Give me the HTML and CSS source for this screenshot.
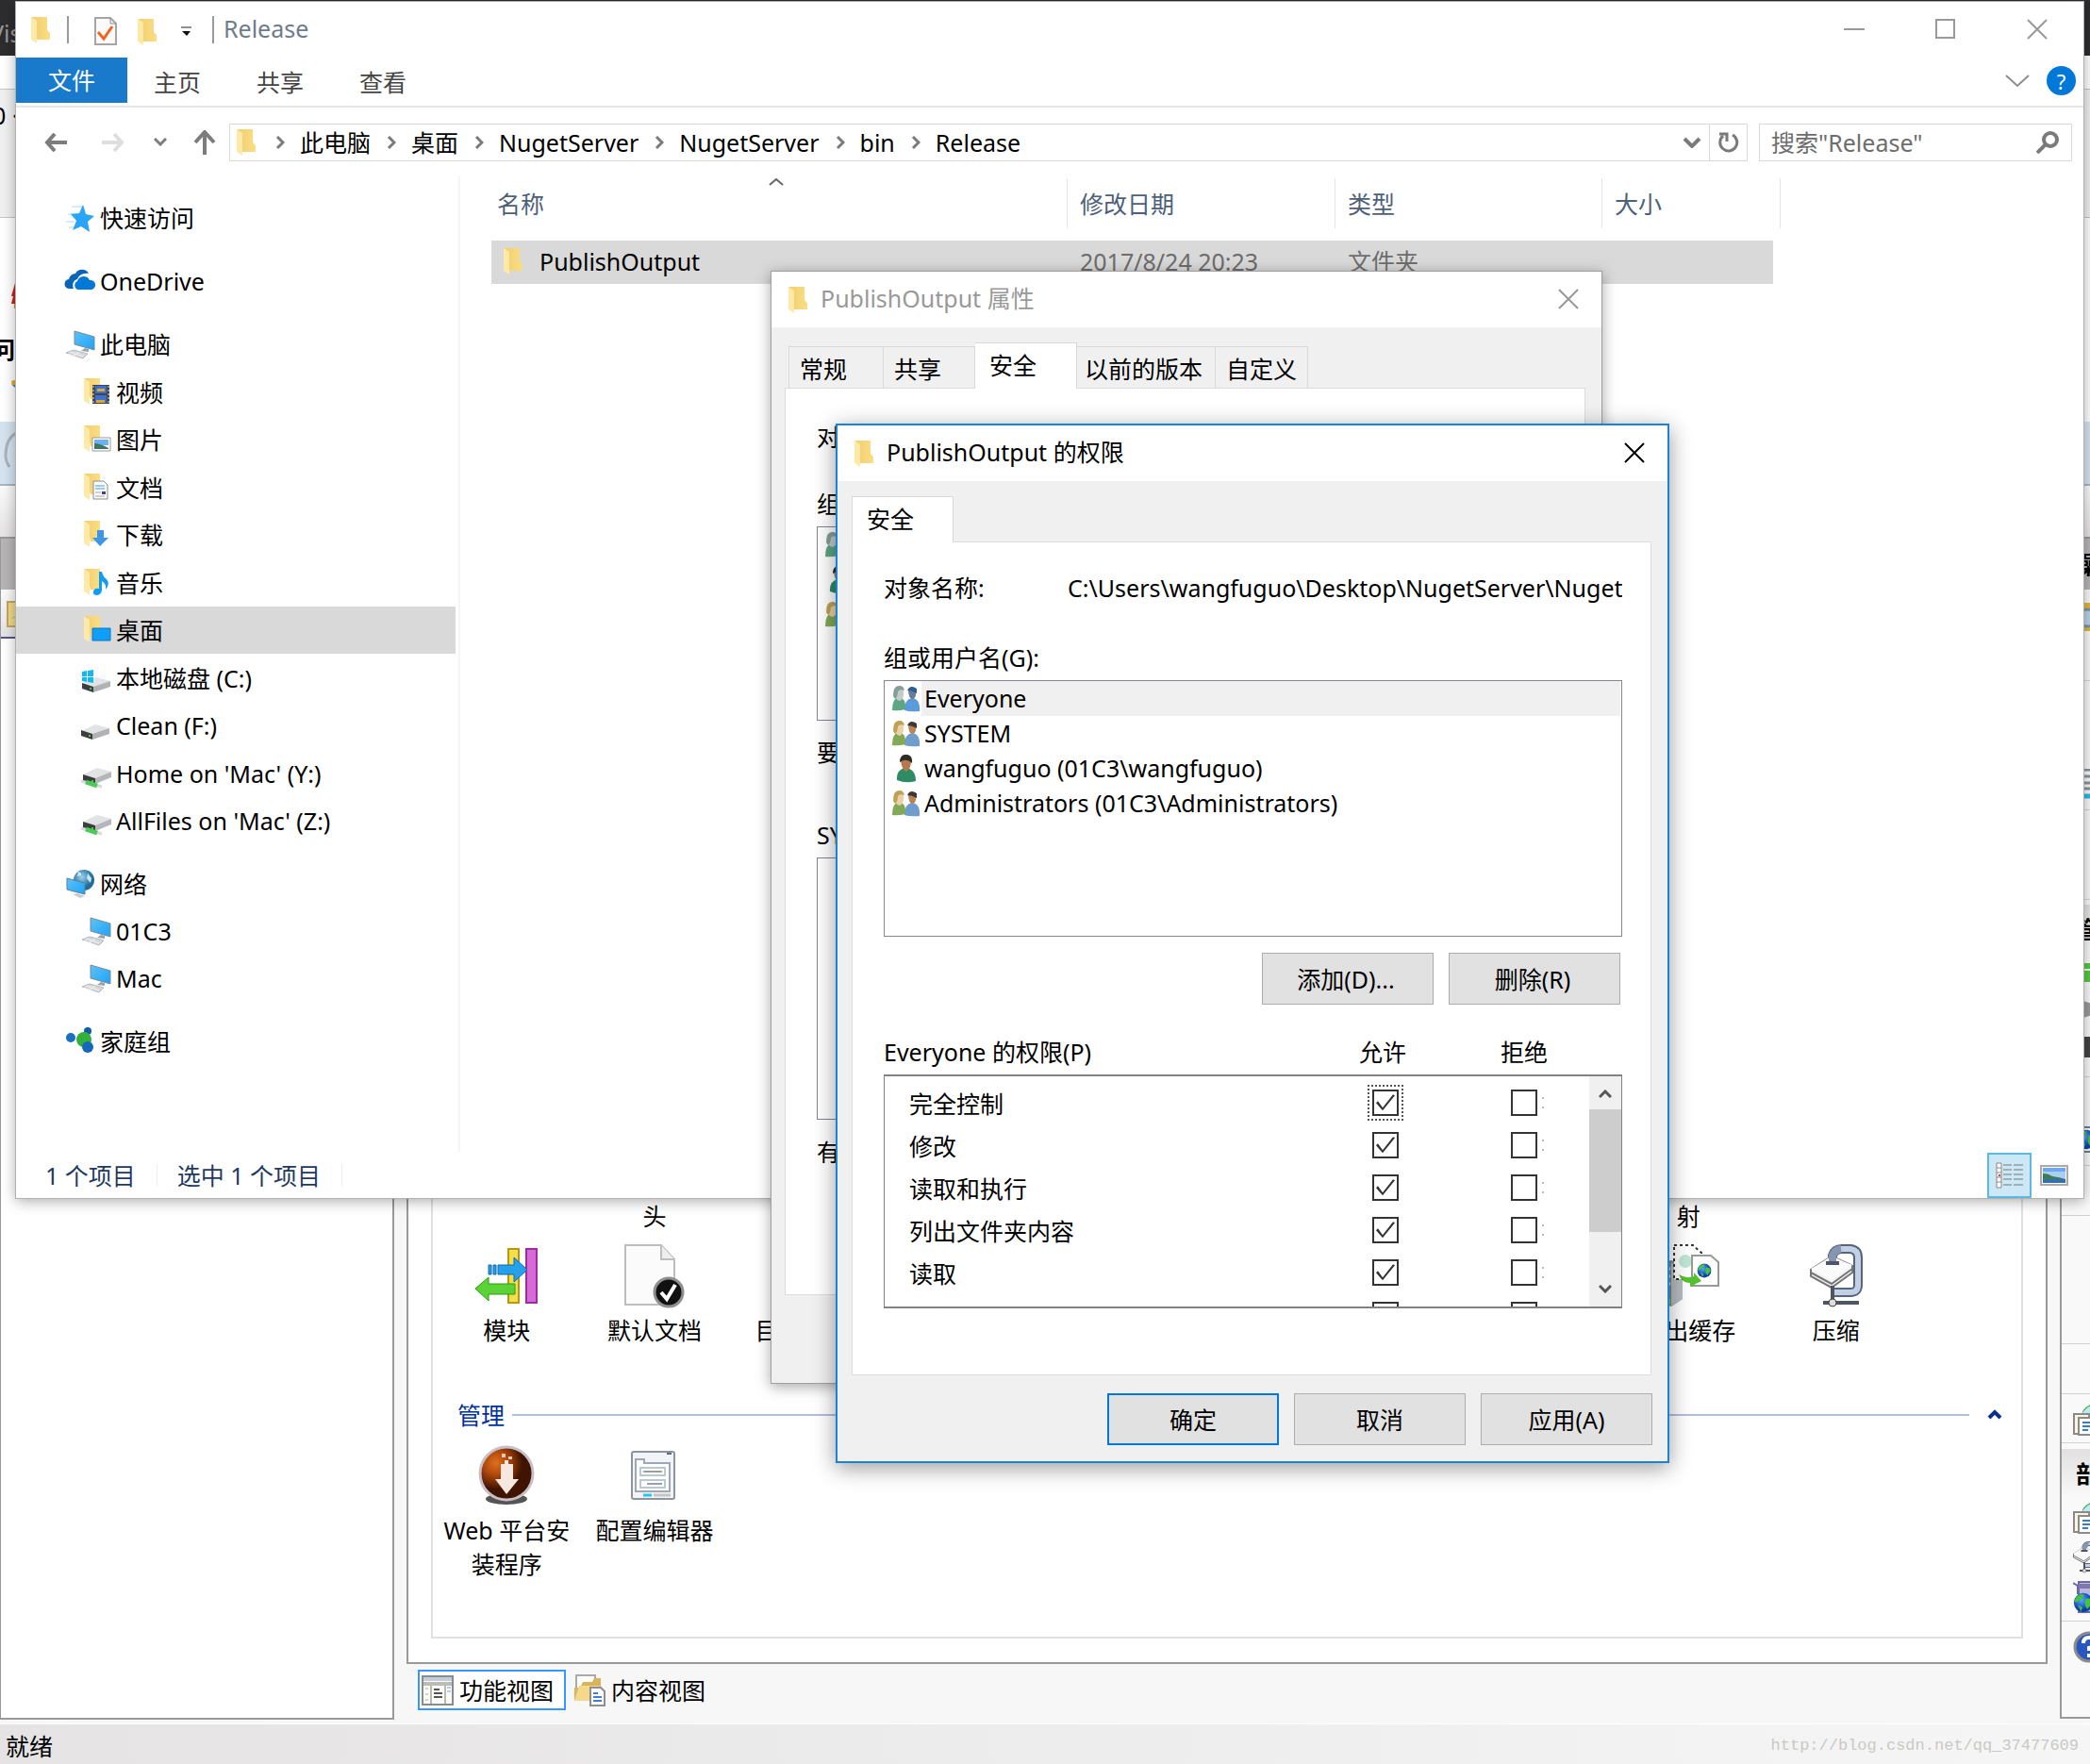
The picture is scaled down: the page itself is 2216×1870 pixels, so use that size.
FILE: index.html
```html
<!DOCTYPE html>
<html lang="zh-CN">
<head>
<meta charset="utf-8">
<title>PublishOutput 的权限</title>
<link rel="stylesheet" href="styles.css">
</head>
<body>
<svg class="defs" aria-hidden="true">
  <defs>
    <linearGradient id="gold" x1="0" x2="1"><stop offset="0" stop-color="#f2cf70"/><stop offset="1" stop-color="#fbdd84"/></linearGradient>
    <linearGradient id="screen" x1="0" y1="0" x2="1" y2="1"><stop offset="0" stop-color="#5cc3f9"/><stop offset="1" stop-color="#1fa2f5"/></linearGradient>
    <radialGradient id="globe" cx=".4" cy=".35"><stop offset="0" stop-color="#9fd0ee"/><stop offset="1" stop-color="#1f6d9c"/></radialGradient>
    <radialGradient id="earth" cx=".4" cy=".35"><stop offset="0" stop-color="#5aa8ff"/><stop offset="1" stop-color="#0b3fb0"/></radialGradient>
    <radialGradient id="rust" cx=".3" cy=".3"><stop offset="0" stop-color="#e0701c"/><stop offset=".5" stop-color="#a9440b"/><stop offset="1" stop-color="#3f1402"/></radialGradient>
    <symbol id="folder" viewBox="0 0 20 28"><path d="M1 0h16v14l3 3v7H6z" fill="url(#gold)"/><path d="M0 0l6 4v24l-6-4z" fill="#ffe9a6"/></symbol>
    <symbol id="folderwide" viewBox="0 0 28 30"><path d="M1 1h16v22H7z" fill="url(#gold)"/><path d="M0 1l6 4v24l-6-4z" fill="#ffe9a6"/></symbol>
    <symbol id="star" viewBox="0 0 32 32"><path d="M7 4h11M3 12h9M1 20h9M4 26h6" stroke="#a5daf9" stroke-width="1"/><path d="M19 2l3 10 9 2-7 6 2 11-9-6-9 4 4-10-6-7 9-1z" fill="#2aa5f5"/></symbol>
    <symbol id="cloud" viewBox="0 0 32 32"><path d="M9 24H5a5 5 0 0 1-1-10 7 7 0 0 1 7-6 8 8 0 0 1 14 0c-7-1-11 3-12 6-4 1-6 5-4 10z" fill="#0a64b8"/><path d="M13 25a5 5 0 0 1 0-9 7 7 0 0 1 13-1 5 5 0 0 1 2 10z" fill="#0078d7"/></symbol>
    <symbol id="pc" viewBox="0 0 32 32"><path d="M10 2l21 6v14l-21-6z" fill="url(#screen)" stroke="#7c8a95"/><path d="M21 20l4 1v3l-8-1z" fill="#9aa3aa"/><path d="M1 25l8-3 15 4-5 5z" fill="#d7dadd" stroke="#b4b8bc"/><path d="M5 24l14 5M3 26l13 5M9 28l6-4" stroke="#f2f2f2"/></symbol>
    <symbol id="drive" viewBox="0 0 32 32"><path d="M1 19l15-7 15 4-18 7z" fill="#e2e3e5"/><path d="M13 22l18-6v6l-18 6z" fill="#b1b2b5"/><path d="M1 18l12 4v6L1 24z" fill="#3b3d40"/><path d="M9 23h2v2H9z" fill="#36d13b"/></symbol>
    <symbol id="windrive" viewBox="0 0 32 32"><use href="#drive" y="3" width="32" height="32"/><path d="M1 9l5-1v6H1zM7 8l6-1v7H7zM1 15h5v5l-5-1zM7 15h6v6l-6-1z" fill="#12b8f4"/></symbol>
    <symbol id="netdrive" viewBox="0 0 34 32"><path d="M3 12l15-7 15 4-17 7z" fill="#e2e3e5"/><path d="M16 16l17-7v6l-17 7z" fill="#b5b6b9"/><path d="M3 12l13 4v7L3 19z" fill="#3b3d40"/><path d="M12 18h2v2h-2z" fill="#36d13b"/><path d="M1 19l22 6" stroke="#d9d9d9" stroke-width="3"/><path d="M6 20l12 4" stroke="#4ccb56" stroke-width="5"/></symbol>
    <symbol id="network" viewBox="0 0 32 32"><circle cx="20" cy="12" r="11" fill="url(#globe)"/><path d="M14 3q4 1 3 4l-4 1zM24 5l4 5-1 5-4-5z" fill="#cfe7f5"/><path d="M2 10l19 5v12L2 22z" fill="url(#screen)" stroke="#5e7f96"/><path d="M8 27l8 4 5-2-8-3z" fill="#c7cbd0"/></symbol>
    <symbol id="home" viewBox="0 0 32 32"><circle cx="24" cy="5" r="4" fill="#0d5ca8"/><circle cx="6" cy="12" r="5" fill="#1b6fc0"/><circle cx="20" cy="14" r="8" fill="#33b03b"/><circle cx="24" cy="22" r="6" fill="#1468bb"/></symbol>
    <symbol id="users" viewBox="0 0 30 30"><path d="M13 27q0-12 8-13 9 1 8 14-10 1-16-1z" fill="#6f9dce"/><path d="M17 5q4-5 8 0 1 9-3 10-5 0-5-10z" fill="#b98456"/><path d="M16 6q3-7 10-2v5q-5-3-10-3z" fill="#3e3733"/><path d="M0 27Q0 14 7 13q8 1 7 13-8 2-14 1z" fill="#82a957"/><path d="M2 6q5-7 10 0 1 9-4 11Q2 16 2 6z" fill="#ead2a8"/><path d="M1 12Q1 0 8 1q4 0 5 5-5-2-7 1 0 5-3 8z" fill="#c0a158"/></symbol>
    <symbol id="userscool" viewBox="0 0 30 30"><path d="M13 27q0-12 8-13 9 1 8 14-10 1-16-1z" fill="#5b9adb"/><path d="M17 5q4-5 8 0 1 9-3 10-5 0-5-10z" fill="#687c98"/><path d="M16 6q3-7 10-2v5q-5-3-10-3z" fill="#2f5e93"/><path d="M0 27Q0 14 7 13q8 1 7 13-8 2-14 1z" fill="#5da684"/><path d="M2 6q5-7 10 0 1 9-4 11Q2 16 2 6z" fill="#c3cbcb"/><path d="M1 12Q1 0 8 1q4 0 5 5-5-2-7 1 0 5-3 8z" fill="#869f96"/></symbol>
    <symbol id="user" viewBox="0 0 30 30"><path d="M5 27q-1-11 9-13 11 1 11 14-10 3-20-1z" fill="#2f8a66"/><path d="M9 6q6-6 11 0 0 9-5 12-5-2-6-12z" fill="#b5794c"/><path d="M8 8q0-9 8-8 6 1 5 9-4-4-9-3z" fill="#2f2b28"/></symbol>
    <symbol id="crumb" viewBox="0 0 10 16"><path d="M2 2l6 6-6 6" fill="none" stroke="#7a7a7a" stroke-width="3"/></symbol>
    <symbol id="down" viewBox="0 0 20 12"><path d="M2 2l8 8 8-8" fill="none" stroke="#7a7a7a" stroke-width="4"/></symbol>
    <symbol id="cross" viewBox="0 0 22 22"><path d="M1 1l20 20M21 1L1 21" fill="none" stroke="currentColor" stroke-width="2"/></symbol>
    <symbol id="clamp" viewBox="0 0 56 68"><path d="M24 18V12q2-7 10-7h9q8 1 8 9v29q0 8-8 8H22" fill="none" stroke="#56657c" stroke-width="10"/><path d="M24 18V12q2-7 10-7h9q8 1 8 9v29q0 8-8 8H22" fill="none" stroke="#c2d0e6" stroke-width="6"/><path d="M1 26l22-14 22 10-22 16z" fill="#fafafa" stroke="#8a8a8a"/><path d="M1 26v8l22 12 22-16v-8M1 30l22 12 22-16" fill="#f4f4f4" stroke="#777" stroke-width="2"/><path d="M1 26l22-12 22 8-22 16z" fill="#fafafa"/><path d="M24 20v-8q2-6 9-7" fill="none" stroke="#8796b0" stroke-width="8"/><path d="M17 20h14M24 44v20M14 62h38" stroke="#4e5665" stroke-width="4"/><circle cx="24" cy="62" r="4" fill="#ddd" stroke="#444"/></symbol>
    <symbol id="newpage" viewBox="0 0 34 34"><circle cx="22" cy="14" r="13" fill="#38b14a"/><path d="M10 10q8-12 20-6l-6 8z" fill="#bfe8f7"/><path d="M1 11h16v21H1z" fill="#fdf6df" stroke="#8a8a8a" stroke-width="2"/><path d="M6 15h18v18H6z" fill="#fff" stroke="#8a8a8a" stroke-width="2"/><path d="M10 20h10M10 24h10M10 28h6" stroke="#3b7dc4" stroke-width="2"/><path d="M18 8l16 4v8z" fill="#ff9a1e"/></symbol>
    <symbol id="earthicon" viewBox="0 0 26 26"><circle cx="13" cy="13" r="12" fill="url(#earth)"/><path d="M4 6q6-5 10-3-2 6-7 8-3 2-5 1zM16 8q8-2 8 6l-6 7q-5-5-2-13zM6 16l6 3-2 5z" fill="#43c43a"/></symbol>
  </defs>
</svg>

<div class="desktop">

  <!-- Server manager behind the file windows -->
  <div class="app">
    <div class="app-title">Vis</div>
    <div class="app-menu"></div>
    <div class="app-ribbon">0 ·</div>
    <div class="app-doc">
      <svg class="red-mark" viewBox="0 0 8 28"><path d="M4 0L0 14h2L0 22h8V0z" fill="#c8231c"/><path d="M3 22h5v5H3z" fill="#d98a2b"/></svg>
      <b>问</b>
      <svg class="shield" viewBox="0 0 10 18"><path d="M0 2l10-2v9H1z" fill="#e5a91f"/><path d="M1 9h9v8z" fill="#3b8cc9"/></svg>
    </div>
    <div class="app-address"><svg width="17" height="68" viewBox="0 0 17 68"><path d="M17 12Q6 18 6 36q0 6 4 12" fill="none" stroke="#a9b4c0" stroke-width="3"/></svg></div>
    <div class="app-crumbs"></div>
    <div class="app-body">
      <section class="side">
        <div class="side-head"></div>
        <div class="side-tools"><svg width="18" height="30" viewBox="0 0 18 30"><path d="M1 2h17v26H1z" fill="#f0d98a" stroke="#c5a75a" stroke-width="2"/><path d="M4 20l6-3V5h8v10z" fill="#4ea52f"/></svg></div>
      </section>

      <section class="center">
        <div class="features">
          <div class="features-inner">
            <div class="tiles">
              <div class="tile tile-2">头</div>
              <div class="tile tile-9">射</div>
            </div>
            <div class="tiles row-iis">
              <div class="tile">
                <svg width="68" height="68" viewBox="0 0 68 68"><path d="M36 5h11v57H36z" fill="#f3df4a" stroke="#b8960f" stroke-width="2"/><path d="M55 5h11v57H55z" fill="#d86ad8" stroke="#a02aa4" stroke-width="2"/><path d="M15 22v10h3V22zm5 0v10h3V22zm5 0h17v-8l14 13-14 13v-8H25z" fill="#25a0ea" stroke="#1769a8"/><path d="M43 42v11H15v7L1 47l14-12v7z" fill="#5bd336" stroke="#2c9a16"/></svg>
                <span>模块</span>
              </div>
              <div class="tile">
                <svg width="68" height="68" viewBox="0 0 68 68"><path d="M3 1h38l14 15v48H3z" fill="#fbfbfb" stroke="#bdbdbd" stroke-width="2"/><path d="M41 1v15h14" fill="#eee" stroke="#bdbdbd" stroke-width="2"/><circle cx="49" cy="51" r="15" fill="#111" stroke="#8f8f8f" stroke-width="3"/><path d="M41 51l6 7 9-15" fill="none" stroke="#fff" stroke-width="4"/></svg>
                <span>默认文档</span>
              </div>
              <div class="tile"><svg width="68" height="68"></svg><span>目录浏览</span></div>
              <div class="tile tile-9">
                <svg width="68" height="68" viewBox="0 0 68 68"><path d="M4 20l12-3 12 5v36l-12 8-12-4z" fill="#7b858c"/><path d="M16 20l12 2v36l-12 8z" fill="#b6bcc0"/><path d="M6 26h9M6 34h9M6 42h9" stroke="#dfe3e5" stroke-width="3"/><path d="M10 58h5v5h-5z" fill="#5fe01f"/><path d="M19 1h20l9 8v28H19z" fill="#fff" stroke="#333" stroke-width="2" stroke-dasharray="3 3"/><circle cx="31" cy="18" r="7" fill="#bfe6d6"/><path d="M38 12h20l8 7v25H38z" fill="#fff" stroke="#999" stroke-width="2"/><use href="#earthicon" x="43" y="20" width="16" height="16"/><path d="M24 32q8 5 16 2v-4l8 9-12 6v-4q-9 0-12-9z" fill="#53c22f"/></svg>
                <span>输出缓存</span>
              </div>
              <div class="tile"><svg width="56" height="68"><use href="#clamp"/></svg><span>压缩</span></div>
            </div>
            <div class="group-head"><span>管理</span><hr><svg width="16" height="12" viewBox="0 0 16 12"><path d="M2 9l6-6 6 6" fill="none" stroke="#0b2f8f" stroke-width="4"/></svg></div>
            <div class="tiles row-admin">
              <div class="tile">
                <svg width="60" height="64" viewBox="0 0 60 64"><ellipse cx="30" cy="57" rx="22" ry="6" fill="#555"/><circle cx="30" cy="30" r="28" fill="url(#rust)" stroke="#c9bfc6" stroke-width="3"/><path d="M24 20h4v-4h4v4h5v16h6L30 52 18 36h6z" fill="#f6e8df"/><path d="M25 9h4v4h-4zM32 12h4v3h-4z" fill="#f1c8ab"/></svg>
                <span>Web 平台安<br>装程序</span>
              </div>
              <div class="tile">
                <svg width="60" height="64" viewBox="0 0 60 64"><rect x="6" y="7" width="45" height="50" rx="2" fill="#f2f5f7" stroke="#8d949b" stroke-width="2"/><path d="M43 9h5" stroke="#5b6b7b" stroke-width="2"/><path d="M10 15h9v4h27v30H10z" fill="#fff" stroke="#9fa6b8" stroke-width="2"/><path d="M15 24h26v8H15zM15 37h26v8H15z" fill="#fff" stroke="#b9c9d3" stroke-width="2"/><path d="M18 28h20M22 41h16" stroke="#9aa0a4" stroke-width="2"/><path d="M18 53h9" stroke="#27c4ef" stroke-width="3"/><path d="M29 53h18" stroke="#c4c4c4" stroke-width="3"/></svg>
                <span>配置编辑器</span>
              </div>
            </div>
          </div>
        </div>
        <div class="view-tabs">
          <button class="view-tab active"><svg width="34" height="32" viewBox="0 0 34 32"><path d="M1 1h32v30H1z" fill="#fbfbf8" stroke="#878c90" stroke-width="2"/><path d="M2 2h30v4H2z" fill="#c3ccd9"/><path d="M2 7h30v4H2z" fill="#bcbcb4"/><path d="M10 11v19M25 11v19" stroke="#b8bab0" stroke-width="2"/><path d="M13 15h6M13 19h9M13 23h9" stroke="#555" stroke-width="2"/><path d="M4 14h3M4 20h3M4 26h3" stroke="#aaa"/><path d="M27 13h4M27 17h4" stroke="#6aa5e8"/></svg>功能视图</button>
          <button class="view-tab"><svg width="34" height="34" viewBox="0 0 34 34"><path d="M3 1h20v20H3z" fill="#fff" stroke="#aaa" stroke-width="2"/><path d="M1 14h6l3-6h10l2-4h7v24H1z" fill="#d9b45a"/><path d="M1 28l5-16h22l-4 16z" fill="#f5d98b"/><path d="M18 14h11l4 4v15H18z" fill="#fff" stroke="#8e8e8e" stroke-width="2"/><path d="M21 20h5M21 24h9M21 28h9" stroke="#3f7fd0" stroke-width="2"/></svg>内容视图</button>
        </div>
      </section>

      <aside class="actions">
        <div class="act-head">操作</div>
        <div class="act act-a"><svg width="24" height="34" viewBox="0 0 24 34"><path d="M0 2h24v30H0z" fill="#e2b53c"/><circle cx="15" cy="18" r="9" fill="#b7d3e4" stroke="#7a96a8" stroke-width="3"/></svg></div>
        <div class="act act-b"><svg width="24" height="34" viewBox="0 0 24 34"><path d="M0 1h24M0 8h24M0 15h24M0 21h24" stroke="#8a929c" stroke-width="3"/><path d="M4 29h20" stroke="#27b9e6" stroke-width="5"/></svg></div>
        <div class="act act-c"></div>
        <div class="act-section">管理网站</div>
        <div class="act-icon"><svg width="24" height="26" viewBox="0 0 24 26"><path d="M4 6h14V0l6 7v5H4zM24 14H8v6h4v6h12z" fill="#55c83c"/></svg></div>
        <div class="act-icon"><svg width="24" height="26" viewBox="0 0 24 26"><path d="M4 2l20 6v10L4 24z" fill="#9a9a9a"/></svg></div>
        <div class="act-icon act-last"><svg width="24" height="22" viewBox="0 0 24 22"><path d="M2 0h22v22H2z" fill="#444"/></svg></div>
        <div class="act act-d"><svg width="24" height="28" viewBox="0 0 24 28"><path d="M0 1h24M0 27h24" stroke="#6f7f92" stroke-width="2"/><use href="#earthicon" x="3" y="3" width="22" height="22"/></svg></div>
        <div class="act act-e"></div>
        <div class="act act-f"></div>
        <div class="act act-e"></div>
        <div class="act act-g"><svg width="34" height="34"><use href="#newpage"/></svg></div>
        <div class="act-section act-deploy">部署</div>
        <div class="act-icon"><svg width="34" height="34"><use href="#newpage"/></svg></div>
        <div class="act-icon"><svg width="28" height="34"><use href="#clamp"/></svg></div>
        <div class="act-icon act-last"><svg width="34" height="34" viewBox="0 0 34 34"><path d="M0 2l5 3v9" fill="none" stroke="#6a66a8" stroke-width="2"/><path d="M6 1h28v32H6z" fill="#b9b6e0" stroke="#6e6a9c" stroke-width="2"/><path d="M6 3h28v5H6z" fill="#7d79ae"/><use href="#earthicon" x="0" y="12" width="22" height="22"/></svg></div>
        <div class="act-icon act-help"><svg width="34" height="34" viewBox="0 0 34 34"><circle cx="17" cy="17" r="15" fill="#2a56c2" stroke="#8b8b8b" stroke-width="3"/><path d="M11 13q0-6 6-6t6 5q0 4-6 6v3M17 24v4" fill="none" stroke="#fff" stroke-width="4"/></svg></div>
      </aside>
    </div>
    <footer class="app-status"><span>就绪</span><span class="watermark">http://blog.csdn.net/qq_37477609</span></footer>
  </div>

  <!-- File explorer -->
  <main class="explorer">
    <header class="ex-title">
      <svg class="t-folder" width="20" height="28"><use href="#folder"/></svg>
      <i class="bar"></i>
      <svg class="t-check" width="24" height="30" viewBox="0 0 24 30"><path d="M1 1h16l6 6v22H1z" fill="#fafafa" stroke="#a5a5a5" stroke-width="2"/><path d="M17 1v6h6" fill="none" stroke="#8d8d8d"/><path d="M4 16l6 7 9-13" fill="none" stroke="#f0641e" stroke-width="3"/></svg>
      <svg class="t-folder2" width="20" height="28"><use href="#folder"/></svg>
      <svg class="t-drop" width="12" height="12" viewBox="0 0 12 12"><path d="M1 2h11" stroke="#222" stroke-width="1"/><path d="M2 6h9l-4 5z" fill="#111"/></svg>
      <i class="bar"></i>
      <span class="t-name">Release</span>
      <div class="win-buttons">
        <button aria-label="最小化"><svg width="22" height="22" viewBox="0 0 22 22"><path d="M0 11h22" stroke="#999" stroke-width="2"/></svg></button>
        <button aria-label="最大化"><svg width="22" height="22" viewBox="0 0 22 22"><path d="M1 1h19v19H1z" fill="none" stroke="#999" stroke-width="2"/></svg></button>
        <button aria-label="关闭"><svg width="22" height="22"><use href="#cross"/></svg></button>
      </div>
    </header>
    <nav class="ribbon">
      <button class="file-tab">文件</button>
      <button>主页</button>
      <button>共享</button>
      <button>查看</button>
      <div class="ribbon-end">
        <svg width="26" height="14" viewBox="0 0 26 14"><path d="M1 1l12 11L25 1" fill="none" stroke="#8c8c8c" stroke-width="2"/></svg>
        <button class="help" aria-label="帮助">?</button>
      </div>
    </nav>
    <div class="address-row">
      <svg class="a-back" width="24" height="20" viewBox="0 0 24 20"><path d="M24 10H3M11 1L3 10l8 9" fill="none" stroke="#7d7d7d" stroke-width="4"/></svg>
      <svg class="a-fwd" width="24" height="20" viewBox="0 0 24 20"><path d="M0 10h21M13 1l8 9-8 9" fill="none" stroke="#dedede" stroke-width="4"/></svg>
      <svg class="a-rec" width="14" height="9" viewBox="0 0 14 9"><path d="M1 1l6 6 6-6" fill="none" stroke="#7d7d7d" stroke-width="3"/></svg>
      <svg class="a-up" width="24" height="26" viewBox="0 0 24 26"><path d="M12 26V3M2 13L12 2l10 11" fill="none" stroke="#7d7d7d" stroke-width="4"/></svg>
      <div class="address">
        <svg width="20" height="28"><use href="#folder"/></svg>
        <svg class="crumb" width="10" height="16"><use href="#crumb"/></svg><a href="#">此电脑</a>
        <svg class="crumb" width="10" height="16"><use href="#crumb"/></svg><a href="#">桌面</a>
        <svg class="crumb" width="10" height="16"><use href="#crumb"/></svg><a href="#">NugetServer</a>
        <svg class="crumb" width="10" height="16"><use href="#crumb"/></svg><a href="#">NugetServer</a>
        <svg class="crumb" width="10" height="16"><use href="#crumb"/></svg><a href="#">bin</a>
        <svg class="crumb" width="10" height="16"><use href="#crumb"/></svg><a href="#">Release</a>
        <svg class="a-drop" width="20" height="12"><use href="#down"/></svg>
        <button class="refresh" aria-label="刷新"><svg width="24" height="24" viewBox="0 0 24 24"><path d="M17 4a9 9 0 1 1-10 1" fill="none" stroke="#7a7a7a" stroke-width="3"/><path d="M3 3h8v8" fill="none" stroke="#7a7a7a" stroke-width="3"/></svg></button>
      </div>
      <div class="search">
        <input type="text" placeholder="搜索&quot;Release&quot;" aria-label="搜索">
        <svg width="24" height="24" viewBox="0 0 24 24"><circle cx="15" cy="9" r="7" fill="none" stroke="#7a7a7a" stroke-width="4"/><path d="M10 14l-9 9" stroke="#7a7a7a" stroke-width="4"/></svg>
      </div>
    </div>

    <div class="ex-body">
      <nav class="tree">
        <div class="branch"><a href="#" class="root"><svg width="32" height="32"><use href="#star"/></svg>快速访问</a></div>
        <div class="branch"><a href="#" class="root"><svg width="32" height="32"><use href="#cloud"/></svg>OneDrive</a></div>
        <div class="branch branch-pc">
          <a href="#" class="root"><svg width="32" height="32"><use href="#pc"/></svg>此电脑</a>
          <a href="#"><svg width="32" height="32" viewBox="0 0 32 32"><use href="#folderwide" x="3" width="28" height="30"/><path d="M12 8h18v20H12z" fill="#444"/><path d="M15 9h12v8H15zM15 19h12v8H15z" fill="#3c6fd6"/><path d="M17 12h8v3h-8zM16 24h9v3h-9z" fill="#d9a833"/><path d="M13 9v19M29 9v19" stroke="#ddd" stroke-dasharray="2 2"/></svg>视频</a>
          <a href="#"><svg width="32" height="32" viewBox="0 0 32 32"><use href="#folderwide" x="3" width="28" height="30"/><path d="M12 14h19v14H12z" fill="#fff" stroke="#9a9a9a"/><path d="M14 16h15v6H14z" fill="#6db1f2"/><path d="M14 20q6 0 15 5v1H14z" fill="#3f7468"/></svg>图片</a>
          <a href="#"><svg width="32" height="32" viewBox="0 0 32 32"><use href="#folderwide" x="3" width="28" height="30"/><path d="M13 9h11l4 4v15H13z" fill="#fafafa" stroke="#8c8c8c"/><path d="M15 14h10M15 17h10" stroke="#36a3dd" stroke-width="1"/><path d="M15 21h6M15 25h10" stroke="#aaa"/><path d="M22 20h4v3h-4z" fill="#447"/></svg>文档</a>
          <a href="#"><svg width="32" height="32" viewBox="0 0 32 32"><use href="#folderwide" x="3" width="28" height="30"/><path d="M17 11h7v8h5l-9 9-8-9h5z" fill="#3d96e6"/></svg>下载</a>
          <a href="#"><svg width="32" height="32" viewBox="0 0 32 32"><use href="#folderwide" x="3" width="28" height="30"/><path d="M19 4h3q1 5 5 8 4 5-1 11 1-6-4-9v10q-1 5-6 5-4-1-3-4 1-4 6-3z" fill="#0f9cf3"/></svg>音乐</a>
          <a href="#" class="selected"><svg width="32" height="32" viewBox="0 0 32 32"><use href="#folderwide" x="3" width="28" height="30"/><path d="M12 14h19v13H12z" fill="#0f9ffa" stroke="#0b77c4"/></svg>桌面</a>
          <a href="#"><svg width="32" height="32"><use href="#windrive"/></svg>本地磁盘 (C:)</a>
          <a href="#"><svg width="32" height="32"><use href="#drive" y="3" width="32" height="32"/></svg>Clean (F:)</a>
          <a href="#"><svg width="34" height="32"><use href="#netdrive" y="5"/></svg>Home on 'Mac' (Y:)</a>
          <a href="#"><svg width="34" height="32"><use href="#netdrive" y="5"/></svg>AllFiles on 'Mac' (Z:)</a>
        </div>
        <div class="branch">
          <a href="#" class="root"><svg width="32" height="32"><use href="#network"/></svg>网络</a>
          <a href="#"><svg width="32" height="32"><use href="#pc"/></svg>01C3</a>
          <a href="#"><svg width="32" height="32"><use href="#pc"/></svg>Mac</a>
        </div>
        <div class="branch"><a href="#" class="root"><svg width="32" height="32"><use href="#home"/></svg>家庭组</a></div>
      </nav>
      <div class="files">
        <svg class="sort" width="16" height="8" viewBox="0 0 16 8"><path d="M1 7l7-6 7 6" fill="none" stroke="#666" stroke-width="2"/></svg>
        <table>
          <colgroup><col class="c-name"><col class="c-date"><col class="c-type"><col class="c-size"></colgroup>
          <thead><tr><th>名称</th><th>修改日期</th><th>类型</th><th>大小</th></tr></thead>
          <tbody><tr><td class="name"><div><svg width="20" height="28"><use href="#folder"/></svg>PublishOutput</div></td><td>2017/8/24 20:23</td><td>文件夹</td><td></td></tr></tbody>
        </table>
      </div>
    </div>

    <footer class="ex-status">
      <span>1 个项目</span><span>选中 1 个项目</span>
      <div class="views">
        <button class="on" aria-label="详细信息"><svg width="30" height="28" viewBox="0 0 30 28"><path d="M1 1h5v26H1z" fill="#fff" stroke="#888"/><path d="M1 6h5M1 11h5M1 16h5M1 21h5" stroke="#888"/><path d="M3 13h2v2H3z" fill="#e33"/><path d="M8 3h9M19 3h10M8 8h9M19 8h10M8 13h9M19 13h10M8 18h9M19 18h10M8 24h9M19 24h10" stroke="#777"/></svg></button>
        <button aria-label="大图标"><svg width="30" height="22" viewBox="0 0 30 22"><path d="M1 1h28v20H1z" fill="#fff" stroke="#aaa" stroke-width="2"/><path d="M3 3h24v12H3z" fill="#a9cff5"/><path d="M3 3h24v4H3z" fill="#6ea8f0"/><path d="M3 9q6 0 10 3 8 1 14 3H3z" fill="#3d7d55"/><path d="M3 15h24v4H3z" fill="#3470b0"/></svg></button>
      </div>
    </footer>
  </main>

  <!-- Properties dialog -->
  <section class="dialog props">
    <header class="dlg-title"><svg width="20" height="28"><use href="#folder"/></svg><span>PublishOutput 属性</span><button aria-label="关闭"><svg width="22" height="22"><use href="#cross"/></svg></button></header>
    <div class="tabs"><button>常规</button><button>共享</button><button class="active">安全</button><button>以前的版本</button><button>自定义</button></div>
    <div class="pane">
      <div class="line">对象名称:</div>
      <div class="line line-group">组或用户名(G):</div>
      <ul class="box box-users">
        <li><svg width="30" height="30"><use href="#userscool"/></svg></li>
        <li><svg width="30" height="30"><use href="#user"/></svg></li>
        <li><svg width="30" height="30"><use href="#users"/></svg></li>
      </ul>
      <div class="line line-edit">要更改权限，请单击“编辑”。</div>
      <div class="line line-perm">SYSTEM 的权限(P)</div>
      <div class="box box-perm"></div>
      <div class="line line-more">有关特殊权限或高级设置，请单击“高级”。</div>
    </div>
  </section>

  <!-- Permissions dialog -->
  <section class="dialog perms">
    <header class="dlg-title"><svg width="20" height="28"><use href="#folder"/></svg><span>PublishOutput 的权限</span><button aria-label="关闭"><svg width="22" height="22"><use href="#cross"/></svg></button></header>
    <div class="tabs"><button class="active">安全</button></div>
    <div class="pane">
      <div class="line object"><span>对象名称:</span><span class="path">C:\Users\wangfuguo\Desktop\NugetServer\NugetServer</span></div>
      <div class="line line-group">组或用户名(G):</div>
      <ul class="box box-users">
        <li class="current"><svg width="30" height="30"><use href="#userscool"/></svg><span>Everyone</span></li>
        <li><svg width="30" height="30"><use href="#users"/></svg><span>SYSTEM</span></li>
        <li><svg width="30" height="30"><use href="#user"/></svg><span>wangfuguo (01C3\wangfuguo)</span></li>
        <li><svg width="30" height="30"><use href="#users"/></svg><span>Administrators (01C3\Administrators)</span></li>
      </ul>
      <div class="btns list-btns"><button class="btn">添加(D)...</button><button class="btn">删除(R)</button></div>
      <div class="line perm-head"><span>Everyone 的权限(P)</span><span>允许</span><span>拒绝</span></div>
      <div class="box perm-box">
        <table>
          <colgroup><col class="p-name"><col class="p-allow"><col></colgroup>
          <tbody>
            <tr><th>完全控制</th><td><input type="checkbox" class="focus" aria-label="允许 完全控制" checked></td><td><input type="checkbox" aria-label="拒绝 完全控制"><i class="dots"></i></td></tr>
            <tr><th>修改</th><td><input type="checkbox" aria-label="允许 修改" checked></td><td><input type="checkbox" aria-label="拒绝 修改"><i class="dots"></i></td></tr>
            <tr><th>读取和执行</th><td><input type="checkbox" aria-label="允许 读取和执行" checked></td><td><input type="checkbox" aria-label="拒绝 读取和执行"><i class="dots"></i></td></tr>
            <tr><th>列出文件夹内容</th><td><input type="checkbox" aria-label="允许 列出文件夹内容" checked></td><td><input type="checkbox" aria-label="拒绝 列出文件夹内容"><i class="dots"></i></td></tr>
            <tr><th>读取</th><td><input type="checkbox" aria-label="允许 读取" checked></td><td><input type="checkbox" aria-label="拒绝 读取"><i class="dots"></i></td></tr>
            <tr><th>写入</th><td><input type="checkbox" aria-label="允许 写入" checked></td><td><input type="checkbox" aria-label="拒绝 写入"></td></tr>
          </tbody>
        </table>
        <div class="scroll">
          <svg width="14" height="10" viewBox="0 0 14 10"><path d="M1 8l6-6 6 6" fill="none" stroke="#555" stroke-width="3"/></svg>
          <div class="thumb"></div>
          <svg class="s-down" width="14" height="10" viewBox="0 0 14 10"><path d="M1 2l6 6 6-6" fill="none" stroke="#555" stroke-width="3"/></svg>
        </div>
      </div>
    </div>
    <footer class="btns dlg-btns"><button class="btn default">确定</button><button class="btn">取消</button><button class="btn">应用(A)</button></footer>
  </section>
</div>
</body>
</html>
```
FILE: styles.css
```css
* { box-sizing: border-box; }
body {
  margin: 0;
  font: 25px/36px "Noto Sans", "Noto Sans CJK SC", sans-serif;
  color: #000;
}
svg { display: block; flex: none; }
a { color: inherit; text-decoration: none; }
button { font: inherit; color: inherit; background: none; border: 0; padding: 0; margin: 0; }
ul { list-style: none; margin: 0; padding: 0; }
table { border-collapse: collapse; table-layout: fixed; }
th, td { padding: 0; font-weight: 400; text-align: left; }
.defs { position: absolute; width: 0; height: 0; }
.desktop { position: relative; overflow: hidden; }

/* ---- server manager ---- */
.app { display: flex; flex-direction: column; min-height: 100vh; background: #f7f7f7; }
.app-title { height: 59px; padding-top: 17px; background: #2d2d30; color: #999; text-indent: -11px; }
.app-menu { height: 35px; background: #fff; }
.app-ribbon { height: 137px; padding-top: 9px; background: #f0f0f0; border: solid #c4c4c4; border-width: 1px 0; text-indent: -8px; }
.app-doc { height: 216px; background: #fff; padding-top: 69px; }
.app-doc b { display: block; margin: 24px 0 11px -9px; }
.red-mark { width: 8px; height: 28px; margin-left: 12px; }
.shield { width: 6px; height: 18px; margin-left: 12px; }
.app-address { height: 68px; background: #d6e4f1; border-bottom: 2px solid #a9b4c4; }
.app-crumbs { height: 56px; background: linear-gradient(#fbfbfb, #e5e3e4); border-bottom: 2px solid #999; }
.app-body { flex: 1; display: grid; grid-template-columns: 418px 1fr 32px; column-gap: 13px; }
.side { background: #fff; margin-bottom: 4px; border: solid #999; border-width: 0 2px 2px 1px; }
.side-head, .act-head { height: 54px; background: #b7b5b6; }
.side-tools { height: 52px; padding: 11px 0 0 6px; background: linear-gradient(#fbfbfb, #e5e3e4); border-bottom: 2px solid #55568a; }
.center { display: flex; flex-direction: column; }
.features { flex: 1; display: flex; padding: 0 24px; background: #fff; border: 2px solid #999; }
.features-inner { flex: 1; margin-bottom: 25px; border: 2px solid #e0e0e0; border-top: 0; padding-top: 698px; }
.tiles { display: grid; grid-template-columns: repeat(10, 1fr); width: 93%; }
.tile { display: flex; flex-direction: column; align-items: center; text-align: center; white-space: nowrap; }
.tile span { margin-top: 5px; }
.tile-2 { grid-column: 2; }
.tile-9 { grid-column: 9; }
.row-iis { margin-top: 12px; }
.row-admin { margin-top: 14px; }
.row-admin span { margin-top: 8px; }
.group-head { display: flex; align-items: center; gap: 8px; margin-top: 54px; padding: 0 20px 0 26px; color: #003399; }
.group-head hr { flex: 1; border: 0; height: 2px; margin: 0 11px 0 0; background: #b0bfe2; }
.view-tabs { display: flex; gap: 4px; padding: 6px 12px 14px; }
.view-tab { display: flex; align-items: center; gap: 6px; height: 43px; padding: 0 11px 0 2px; border: 2px solid transparent; }
.view-tab.active { background: #fff; border-color: #3399ff; }
.actions { background: #f9f9f9; border: solid #999; border-width: 0 0 2px 2px; margin-bottom: 5px; overflow: hidden; white-space: nowrap; }
.act-head, .act-section { padding-left: 12px; font-weight: 700; }
.act-head { padding-top: 9px; }
.act { padding-left: 12px; border-bottom: 1px solid #d2d2d2; }
.act-a { height: 97px; padding-top: 12px; }
.act-b { height: 137px; padding-top: 93px; }
.act-c { height: 95px; margin-bottom: 5px; }
.act-d { height: 94px; padding-top: 52px; }
.act-e { height: 53px; }
.act-f { height: 136px; }
.act-g { height: 52px; padding-top: 10px; }
.act-section { height: 52px; padding-top: 8px; background: linear-gradient(#e2e0e1, #f9f9f9); }
.act-deploy { margin-top: 6px; padding-left: 15px; }
.act-icon { height: 42px; padding: 4px 0 0 12px; }
.act-last { height: 47px; border-bottom: 1px solid #d2d2d2; }
.act-help { padding-top: 10px; }
.app-status { display: flex; justify-content: space-between; align-items: center; height: 43px; padding: 3px 12px 0 6px; background: linear-gradient(90deg, #e5e3e4, #f6f6f6); border-top: 1px solid #fff; }
.watermark { font: 17px/20px "Liberation Mono", monospace; color: #c9c9c4; }

/* ---- explorer ---- */
.explorer { position: absolute; top: 2px; left: 17px; right: 7px; background: #fff; box-shadow: 0 0 0 1px #b0b0b0, 0 3px 14px rgba(0, 0, 0, .35); }
.ex-title { display: flex; align-items: center; height: 59px; padding-left: 16px; color: #6e7b8c; }
.ex-title .bar { width: 2px; height: 29px; background: #9a9a9a; }
.t-folder { margin-right: 18px; }
.t-check { margin: 2px 22px 0 27px; }
.t-folder2 { margin: 5px 25px 0 0; }
.t-drop { margin: 3px 22px 0 0; }
.t-name { margin: 0 0 4px 10px; }
.win-buttons { margin: 0 1px 2px auto; display: flex; color: #999; }
.win-buttons button { width: 97px; display: grid; place-items: center; }
.ribbon { display: flex; height: 53px; border-bottom: 2px solid #e6e6e6; color: #444; }
.ribbon > button { width: 109px; height: 51px; padding-right: 3px; }
.ribbon > .file-tab { width: 118px; height: 48px; padding: 0; background: #1979ca; color: #fff; }
.ribbon-end { margin-left: auto; display: flex; align-items: center; gap: 18px; padding: 0 8px 2px 0; }
.help { width: 31px; height: 31px; border-radius: 50%; background: #0078d7; color: #fff; font-size: 22px; line-height: 30px; }
.address-row { display: flex; align-items: center; height: 73px; padding: 0 12px 0 30px; color: #000; }
.a-back { margin-right: 37px; }
.a-fwd { margin-right: 31px; }
.a-rec { margin-right: 28px; }
.a-up { margin-right: 14px; }
.address { flex: 1; display: flex; align-items: center; height: 40px; padding-left: 7px; border: 1px solid #d9d9d9; }
.crumb { margin: 0 16px 0 17px; }
.address svg:first-child { margin-right: 4px; }
.a-drop { margin-left: auto; margin-right: 8px; }
.refresh { width: 40px; height: 38px; display: grid; place-items: center; padding-left: 3px; border-left: 1px solid #d9d9d9; }
.search { display: flex; align-items: center; width: 332px; height: 40px; margin-left: 12px; padding: 0 13px 0 12px; border: 1px solid #d9d9d9; }
.search input { flex: 1; min-width: 0; border: 0; padding: 0; font: inherit; background: none; }
.search input::placeholder { color: #6d6d6d; opacity: 1; }
.ex-body { display: flex; }
.tree { width: 471px; padding: 19px 3px 92px 0; border-right: 2px solid #f5f5f5; }
.branch { display: flex; flex-direction: column; justify-content: space-between; margin-bottom: 17px; }
.branch-pc { height: 555px; }
.branch:last-child { margin-bottom: 0; }
.tree a { display: flex; align-items: center; height: 50px; padding-left: 68px; white-space: nowrap; }
.tree a svg { width: 34px; margin-right: 4px; }
.tree a.root { padding-left: 51px; }
.tree a.selected { background: #d9d9d9; }
.files { position: relative; padding-left: 33px; flex: 1; }
.sort { position: absolute; left: 327px; top: 2px; }
.files table { width: 1359px; }
.c-name { width: 611px; }
.c-date { width: 284px; }
.c-type { width: 283px; }
.c-size { width: 181px; }
.files th { position: relative; height: 68px; padding: 0 0 10px 13px; color: #4c607a; }
.files th:first-child { padding-left: 6px; }
.files th::after { content: ""; position: absolute; right: 0; top: 2px; width: 1px; height: 53px; background: #e5e5e5; }
.files th:last-child::after { right: -8px; }
.files tbody tr { background: #d9d9d9; color: #6d6d6d; }
.files td { height: 46px; padding: 0 0 2px 13px; }
.files .name { color: #000; }
.name div { display: flex; align-items: center; gap: 18px; }
.ex-status { display: flex; align-items: center; height: 49px; padding-left: 15px; color: #1e3a5f; }
.ex-status span { padding: 0 22px 0 16px; border-right: 1px solid #eee; line-height: 24px; margin-right: 5px; }
.views { margin-left: auto; display: flex; padding-right: 8px; }
.views button { width: 47px; height: 48px; display: grid; place-items: center; }
.views .on { background: #cce8f6; border: 2px solid #5fb8e3; }

/* ---- dialogs ---- */
.dialog { position: absolute; background: #f0f0f0; }
.dlg-title { display: flex; align-items: center; height: 59px; padding: 0 24px 0 18px; background: #fff; }
.dlg-title span { flex: 1; margin: 0 0 3px 14px; }
.dlg-title button { margin-bottom: 2px; }
.tabs { display: flex; align-items: flex-end; height: 65px; padding-left: 4px; position: relative; }
.tabs button { height: 44px; margin-bottom: 1px; padding: 2px 11px 0; text-align: left; border: solid #d9d9d9; border-width: 1px 1px 0 0; }
.tabs button:first-child { border-left-width: 1px; }
.tabs .active { width: 108px; height: 49px; margin-bottom: 0; padding: 0 15px 3px; background: #fff; }
.pane { padding: 30px 30px 0 33px; margin-top: -1px; background: #fff; border: 1px solid #dcdcdc; }
.line { height: 36px; white-space: nowrap; }
.line-group { margin-top: 38px; }
.box { border: 1px solid #828790; background: #fff; }
.box-users { margin-top: 6px; padding: 0 1px; height: 272px; }
.box-users li { display: flex; align-items: center; height: 37px; padding-left: 7px; }
.box-users span { flex: 1; padding: 0 0 1px 3px; margin-left: 1px; }
.box-users .current span { background: #f0f0f0; }

.props { top: 287px; left: 817px; width: 882px; height: 1180px; border: 1px solid #a0a0a0; box-shadow: 0 3px 14px rgba(0, 0, 0, .35); overflow: hidden; }
.props .dlg-title { color: #999; }
.props .tabs { padding-left: 18px; }
.props .tabs button:nth-child(1) { width: 101px; }
.props .tabs button:nth-child(2) { width: 97px; }
.props .tabs button:nth-child(4) { width: 147px; padding: 2px 8px 0; }
.props .pane { margin: -1px 17px 0 14px; padding-top: 33px; height: 962px; }
.props .line-group { margin-top: 35px; }
.props .box-users { height: 206px; }
.props .line-edit { margin-top: 15px; }
.props .line-perm { margin-top: 52px; }
.box-perm { height: 278px; margin-top: 6px; }
.props .line-more { margin-top: 16px; }

.perms { top: 449px; left: 886px; width: 884px; border: 2px solid #1883d7; box-shadow: 0 5px 22px rgba(0, 0, 0, .4); }
.perms .tabs { padding-left: 15px; }
.perms .pane { margin: -1px 17px 0 15px; height: 884px; }
.object { display: flex; }
.object .path { margin-left: auto; width: 588px; overflow: hidden; }
.btns { display: flex; justify-content: flex-end; gap: 16px; margin-top: 17px; }
.list-btns { margin-right: 2px; }
.btn { width: 182px; height: 55px; background: #e1e1e1; border: 1px solid #adadad; }
.list-btns .btn { padding-right: 4px; }
.btn.default { border: 2px solid #0078d7; }
.perm-head { display: grid; grid-template-columns: 504px 150px 1fr; margin-top: 32px; }
.perm-box { display: flex; height: 248px; margin-top: 6px; overflow: hidden; border: 2px solid #828282; border-left-width: 1px; border-right-width: 1px; }
.perm-box table { flex: 1; margin-top: 5px; height: 270px; }
.p-name { width: 517px; }
.p-allow { width: 147px; }
.perm-box th { height: 45px; padding: 2px 0 0 26px; }
.perm-box td { height: 45px; padding-bottom: 5px; white-space: nowrap; }
.perm-box input { appearance: none; width: 28px; height: 28px; margin: 0; border: 2px solid #333; background: #fff; vertical-align: middle; }
.perm-box input:checked::before { content: ""; display: block; width: 24px; height: 24px; background: #333; clip-path: polygon(2px 12px, 4px 10px, 9px 17px, 20px 3px, 22px 4px, 9px 20px); }
.perm-box .focus { outline: 2px dotted #555; outline-offset: 3px; }
.dots { display: inline-block; width: 2px; height: 12px; margin-left: 5px; border: solid #bbb; border-width: 2px 0; vertical-align: middle; }
.scroll { width: 34px; background: #f0f0f0; display: flex; flex-direction: column; align-items: center; padding: 14px 0; }
.thumb { width: 34px; height: 130px; margin-top: 11px; background: #cdcdcd; }
.s-down { margin-top: auto; }
.dlg-btns { margin: 19px 16px 17px 0; }
```
